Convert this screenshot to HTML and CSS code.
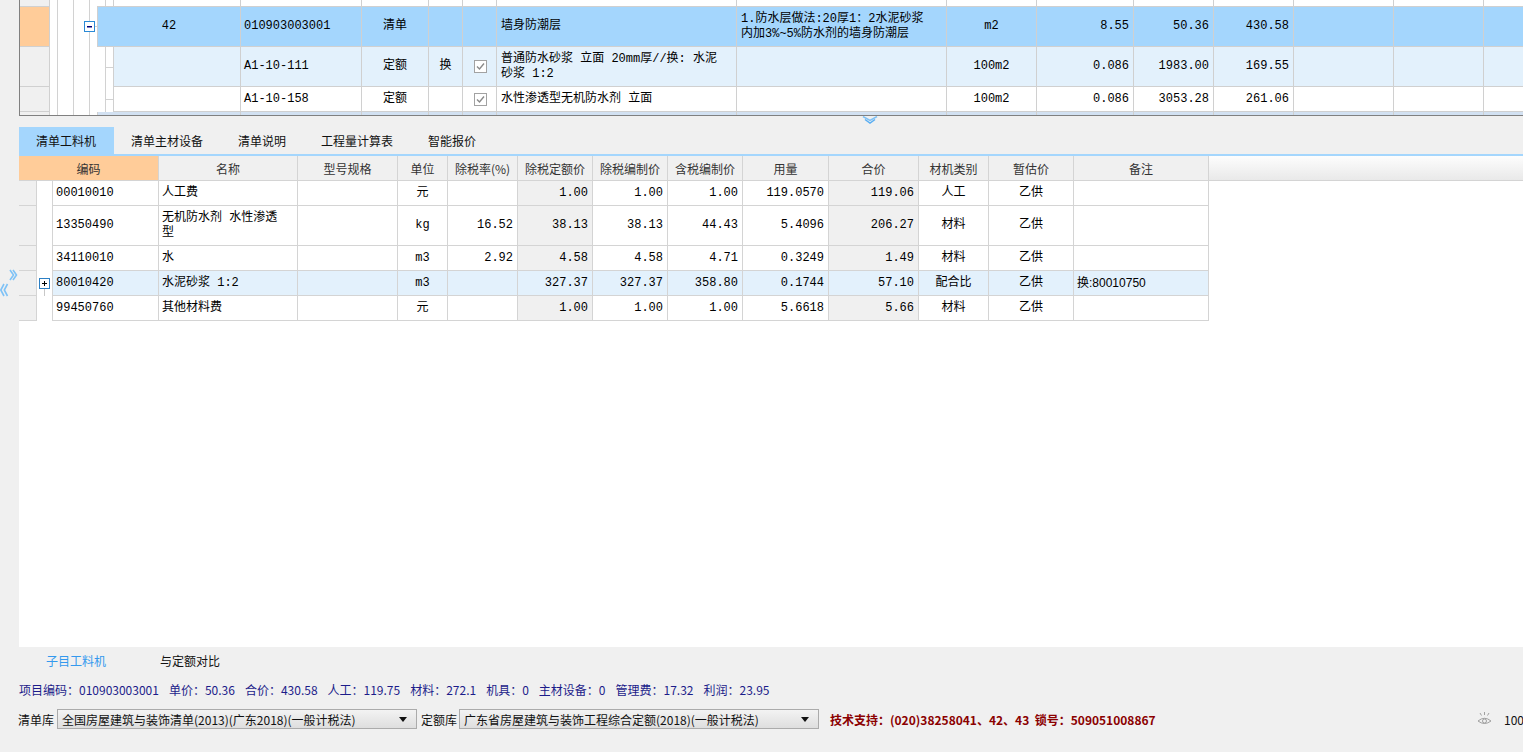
FILE: index.html
```html
<!DOCTYPE html>
<html lang="zh-CN">
<head>
<meta charset="utf-8">
<title>清单工料机</title>
<link rel="stylesheet" href="styles.css">
</head>
<body>
<div class="app">

  <section class="top-pane">
    <div class="trow r0">
      <div class="rh rh-open"></div>
      <div class="gut gut-sub noconn"></div>
      <div class="cells c-white open">
        <div class="c w1s"></div><div class="c w2"></div><div class="c w3"></div><div class="c w4"></div><div class="c w5"></div><div class="c w6"></div><div class="c w7"></div><div class="c w8"></div><div class="c w9"></div><div class="c w10"></div><div class="c w11"></div><div class="c w12"></div><div class="c w13"></div><div class="c w14"></div>
      </div>
    </div>

    <div class="trow r1">
      <div class="rh sel topb"></div>
      <div class="gut gut-main"><span class="tbox minus"></span></div>
      <div class="cells c-sel topb">
        <div class="c w1m ctr">42</div>
        <div class="c w2">010903003001</div>
        <div class="c w3 ctr">清单</div>
        <div class="c w4"></div>
        <div class="c w5"></div>
        <div class="c w6">墙身防潮层</div>
        <div class="c w7">1.防水层做法:20厚1：2水泥砂浆<br>内加3%~5%防水剂的墙身防潮层</div>
        <div class="c w8 ctr">m2</div>
        <div class="c w9 num">8.55</div>
        <div class="c w10 num">50.36</div>
        <div class="c w11 num">430.58</div>
        <div class="c w12"></div><div class="c w13"></div><div class="c w14"></div>
      </div>
    </div>

    <div class="trow r2">
      <div class="rh"></div>
      <div class="gut gut-sub"></div>
      <div class="cells c-light">
        <div class="c w1s"></div>
        <div class="c w2">A1-10-111</div>
        <div class="c w3 ctr">定额</div>
        <div class="c w4 ctr">换</div>
        <div class="c w5 ctr"><span class="chk"><svg viewBox="0 0 11 11" width="11" height="11"><polyline points="2,5.5 4.5,8 9,2.5" fill="none" stroke="#8a8a8a" stroke-width="1.4"/></svg></span></div>
        <div class="c w6">普通防水砂浆 立面 20mm厚//换: 水泥<br>砂浆 1:2</div>
        <div class="c w7"></div>
        <div class="c w8 ctr">100m2</div>
        <div class="c w9 num">0.086</div>
        <div class="c w10 num">1983.00</div>
        <div class="c w11 num">169.55</div>
        <div class="c w12"></div><div class="c w13"></div><div class="c w14"></div>
      </div>
    </div>

    <div class="trow r3">
      <div class="rh"></div>
      <div class="gut gut-sub"></div>
      <div class="cells c-white">
        <div class="c w1s"></div>
        <div class="c w2">A1-10-158</div>
        <div class="c w3 ctr">定额</div>
        <div class="c w4"></div>
        <div class="c w5 ctr"><span class="chk"><svg viewBox="0 0 11 11" width="11" height="11"><polyline points="2,5.5 4.5,8 9,2.5" fill="none" stroke="#8a8a8a" stroke-width="1.4"/></svg></span></div>
        <div class="c w6">水性渗透型无机防水剂 立面</div>
        <div class="c w7"></div>
        <div class="c w8 ctr">100m2</div>
        <div class="c w9 num">0.086</div>
        <div class="c w10 num">3053.28</div>
        <div class="c w11 num">261.06</div>
        <div class="c w12"></div><div class="c w13"></div><div class="c w14"></div>
      </div>
    </div>

    <div class="trow r4">
      <div class="rh"></div>
      <div class="gut gut-main"></div>
      <div class="cells c-next">
        <div class="c w1m"></div><div class="c w2"></div><div class="c w3"></div><div class="c w4"></div><div class="c w5"></div><div class="c w6"></div><div class="c w7"></div><div class="c w8"></div><div class="c w9"></div><div class="c w10"></div><div class="c w11"></div><div class="c w12"></div><div class="c w13"></div><div class="c w14"></div>
      </div>
    </div>
  </section>

  <div class="splitter">
    <svg class="split-chev" width="16" height="8" viewBox="0 0 16 8">
      <polyline points="1,0.5 8,4.5 15,0.5" fill="none" stroke="#7cc0f6" stroke-width="1.5"/>
      <polyline points="3,3.5 8,7 13,3.5" fill="none" stroke="#5aaef2" stroke-width="1.5"/>
    </svg>
  </div>

  <div class="lower">
    <div class="side">
      <svg width="19" height="32" viewBox="0 0 19 32">
        <polyline points="10,3 13.5,8 10,13" fill="none" stroke="#7fc2f6" stroke-width="1.6"/>
        <polyline points="13,3 16.5,8 13,13" fill="none" stroke="#7fc2f6" stroke-width="1.6"/>
        <polyline points="4,17 0.8,23 4,29" fill="none" stroke="#7fc2f6" stroke-width="1.6"/>
        <polyline points="7.5,17 4.3,23 7.5,29" fill="none" stroke="#7fc2f6" stroke-width="1.6"/>
      </svg>
    </div>
    <div class="lower-main">
      <div class="tabs">
        <div class="tab active">清单工料机</div>
        <div class="tab">清单主材设备</div>
        <div class="tab">清单说明</div>
        <div class="tab">工程量计算表</div>
        <div class="tab">智能报价</div>
      </div>

      <div class="grid-area">
        <div class="bhead">
          <div class="h hc0 code-h">编码</div>
          <div class="h hc3">名称</div>
          <div class="h hc4">型号规格</div>
          <div class="h hc5">单位</div>
          <div class="h hc6">除税率(%)</div>
          <div class="h hc7">除税定额价</div>
          <div class="h hc8">除税编制价</div>
          <div class="h hc9">含税编制价</div>
          <div class="h hc10">用量</div>
          <div class="h hc11">合价</div>
          <div class="h hc12">材机类别</div>
          <div class="h hc13">暂估价</div>
          <div class="h hc14">备注</div>
          <div class="h hfill"></div>
        </div>

        <div class="brow">
          <div class="d rhd"></div><div class="d tree"></div>
          <div class="d">00010010</div><div class="d">人工费</div><div class="d"></div><div class="d ctr">元</div><div class="d num"></div>
          <div class="d num shade">1.00</div><div class="d num">1.00</div><div class="d num">1.00</div><div class="d num">119.0570</div>
          <div class="d num shade">119.06</div><div class="d ctr">人工</div><div class="d ctr">乙供</div><div class="d"></div>
        </div>
        <div class="brow tall">
          <div class="d rhd"></div><div class="d tree"></div>
          <div class="d">13350490</div><div class="d">无机防水剂 水性渗透<br>型</div><div class="d"></div><div class="d ctr">kg</div><div class="d num">16.52</div>
          <div class="d num shade">38.13</div><div class="d num">38.13</div><div class="d num">44.43</div><div class="d num">5.4096</div>
          <div class="d num shade">206.27</div><div class="d ctr">材料</div><div class="d ctr">乙供</div><div class="d"></div>
        </div>
        <div class="brow">
          <div class="d rhd"></div><div class="d tree"></div>
          <div class="d">34110010</div><div class="d">水</div><div class="d"></div><div class="d ctr">m3</div><div class="d num">2.92</div>
          <div class="d num shade">4.58</div><div class="d num">4.58</div><div class="d num">4.71</div><div class="d num">0.3249</div>
          <div class="d num shade">1.49</div><div class="d ctr">材料</div><div class="d ctr">乙供</div><div class="d"></div>
        </div>
        <div class="brow hl">
          <div class="d rhd"></div><div class="d tree node"><span class="tbox plus"></span><span class="stem"></span></div>
          <div class="d">80010420</div><div class="d">水泥砂浆 1:2</div><div class="d"></div><div class="d ctr">m3</div><div class="d num"></div>
          <div class="d num">327.37</div><div class="d num">327.37</div><div class="d num">358.80</div><div class="d num">0.1744</div>
          <div class="d num">57.10</div><div class="d ctr">配合比</div><div class="d ctr">乙供</div><div class="d note">换:80010750</div>
        </div>
        <div class="brow">
          <div class="d rhd"></div><div class="d tree"></div>
          <div class="d">99450760</div><div class="d">其他材料费</div><div class="d"></div><div class="d ctr">元</div><div class="d num"></div>
          <div class="d num shade">1.00</div><div class="d num">1.00</div><div class="d num">1.00</div><div class="d num">5.6618</div>
          <div class="d num shade">5.66</div><div class="d ctr">材料</div><div class="d ctr">乙供</div><div class="d"></div>
        </div>
      </div>
    </div>
  </div>

  <div class="subtabs">
    <span class="subtab on">子目工料机</span>
    <span class="subtab">与定额对比</span>
  </div>

  <div class="summary">
    <span>项目编码：010903003001</span>
    <span>单价：50.36</span>
    <span>合价：430.58</span>
    <span>人工：119.75</span>
    <span>材料：272.1</span>
    <span>机具：0</span>
    <span>主材设备：0</span>
    <span>管理费：17.32</span>
    <span>利润：23.95</span>
  </div>

  <div class="status">
    <span class="lbl">清单库</span>
    <div class="combo"><span>全国房屋建筑与装饰清单(2013)(广东2018)(一般计税法)</span><svg width="8" height="5" viewBox="0 0 8 5"><polygon points="0,0 8,0 4,5" fill="#111"/></svg></div>
    <span class="lbl lbl2">定额库</span>
    <div class="combo"><span>广东省房屋建筑与装饰工程综合定额(2018)(一般计税法)</span><svg width="8" height="5" viewBox="0 0 8 5"><polygon points="0,0 8,0 4,5" fill="#111"/></svg></div>
    <span class="support">技术支持：(020)38258041、42、43&nbsp; 锁号：509051008867</span>
    <div class="zoombox">
      <svg width="15" height="14" viewBox="0 0 15 14">
        <line x1="7.5" y1="0" x2="7.5" y2="3" stroke="#a0a0a0" stroke-width="1"/>
        <line x1="3" y1="1" x2="4.5" y2="3.5" stroke="#a0a0a0" stroke-width="1"/>
        <line x1="12" y1="1" x2="10.5" y2="3.5" stroke="#a0a0a0" stroke-width="1"/>
        <path d="M1 9 Q7.5 3.5 14 9 Q7.5 14 1 9 Z" fill="none" stroke="#a0a0a0" stroke-width="1"/>
        <circle cx="7.5" cy="9" r="2" fill="none" stroke="#a0a0a0" stroke-width="1"/>
      </svg>
      <span class="zoomtxt">100%</span>
    </div>
  </div>

</div>
</body>
</html>
```

FILE: styles.css
```css
* { box-sizing: border-box; }
html, body { margin: 0; padding: 0; }
body {
  background: #f0f0f0;
  width: 1523px;
  height: 752px;
  overflow: hidden;
  font-family: "Noto Sans CJK SC", "Liberation Sans", sans-serif;
  font-size: 12px;
  color: #000;
}
.app { display: flex; flex-direction: column; height: 752px; }

/* ---------- top tree grid ---------- */
.top-pane {
  margin-left: 19px;
  height: 116px;
  flex: none;
  background: #fff;
  border-left: 1px solid #808080;
  border-bottom: 1px solid #808080;
  overflow: hidden;
}
.trow { display: flex; flex: none; }
.r0 { height: 6px; }
.r1 { height: 41px; }
.r2 { height: 40px; }
.r3 { height: 25px; }
.r4 { height: 20px; }

.rh {
  width: 30px;
  flex: none;
  background: #f0f0f0;
  border-right: 1px solid #d0d0d0;
  border-bottom: 1px solid #d0d0d0;
}
.rh.rh-open { border-bottom: none; }
.rh.sel { background: #ffcc99; }
.topb { border-top: 1px solid #d0d0d0; }

.gut {
  flex: none;
  display: flex;
  align-items: center;
  background-repeat: no-repeat;
}
.gut-main {
  width: 47px;
  padding-left: 34px;
  background-image:
    linear-gradient(#d2d2d2, #d2d2d2),
    linear-gradient(#d2d2d2, #d2d2d2),
    linear-gradient(#d2d2d2, #d2d2d2),
    linear-gradient(#d2d2d2, #d2d2d2);
  background-size: 1px 100%, 1px 100%, 1px 100%, 3px 1px;
  background-position: 7px 0, 23px 0, 39px 0, 44px 50%;
}
.gut-sub {
  width: 63px;
  background-image:
    linear-gradient(#d2d2d2, #d2d2d2),
    linear-gradient(#d2d2d2, #d2d2d2),
    linear-gradient(#d2d2d2, #d2d2d2),
    linear-gradient(#d2d2d2, #d2d2d2),
    linear-gradient(#d2d2d2, #d2d2d2);
  background-size: 1px 100%, 1px 100%, 1px 100%, 1px 100%, 8px 1px;
  background-position: 7px 0, 23px 0, 39px 0, 55px 0, 55px 50%;
}
.gut-sub.noconn { background-size: 1px 100%, 1px 100%, 1px 100%, 1px 100%, 0 0; }

.tbox {
  width: 11px;
  height: 11px;
  flex: none;
  background: #fff;
  border: 1px solid #2a8ad6;
  position: relative;
  display: block;
}
.tbox.minus::before {
  content: "";
  position: absolute;
  left: 2px; top: 4px;
  width: 5px; height: 1px;
  background: #00007a;
  box-shadow: 0 0.5px 0 #00007a;
}
.tbox.plus { border-color: #2c7fc4; }
.tbox.plus::before {
  content: "";
  position: absolute;
  left: 2px; top: 4px;
  width: 5px; height: 1px;
  background: #000;
}
.tbox.plus::after {
  content: "";
  position: absolute;
  left: 4px; top: 2px;
  width: 1px; height: 5px;
  background: #000;
}

.cells {
  display: flex;
  flex: 1;
  min-width: 0;
  border-left: 1px solid #d0d0d0;
}
.c-sel { background: #a4d6fd; }
.c-light { background: #e3f1fc; }
.c-white { background: #fff; }
.c-next { background: #d2e1f2; }

.c {
  flex: none;
  display: flex;
  align-items: center;
  padding: 0 4px 0 3px;
  border-right: 1px solid #d0d0d0;
  border-bottom: 1px solid #d0d0d0;
  font-family: "Liberation Mono", "Noto Sans CJK SC", monospace;
  font-size: 12px;
  line-height: 15px;
  white-space: nowrap;
  overflow: hidden;
}
.open .c { border-bottom: none; }
.c.ctr { justify-content: center; padding: 0; }
.c.num { justify-content: flex-end; padding-right: 4px; }
.w1m { width: 143px; }
.w1s { width: 127px; }
.w2 { width: 121px; }
.w3 { width: 67px; }
.w4 { width: 34px; }
.w5 { width: 34px; }
.w6 { width: 240px; padding-left: 4px; }
.w7 { width: 210px; padding-left: 4px; }
.w8 { width: 90px; }
.w9 { width: 97px; }
.w10 { width: 80px; }
.w11 { width: 80px; }
.w12 { width: 100px; }
.w13 { width: 90px; }
.w14 { flex: 1; border-right: none; }

.chk {
  width: 13px;
  height: 13px;
  border: 1px solid #a2a2a2;
  background: #fff;
  display: flex;
  align-items: center;
  justify-content: center;
  margin-left: 1px;
}

/* ---------- splitter ---------- */
.splitter {
  height: 11px;
  flex: none;
  padding-left: 862px;
}
.split-chev { display: block; }

/* ---------- lower pane ---------- */
.lower { display: flex; flex: none; height: 520px; }
.side { width: 19px; flex: none; padding-top: 140px; }
.side svg { display: block; }
.lower-main { flex: 1; display: flex; flex-direction: column; min-width: 0; }

.tabs {
  height: 29px;
  flex: none;
  display: flex;
  border-bottom: 2px solid #a4d6fd;
}
.tab {
  padding: 0 18px 0 17px;
  line-height: 27px;
  font-size: 12px;
  color: #111;
  white-space: nowrap;
}
.tab.active { background: #a4d6fd; }

.grid-area {
  flex: 1;
  background: #fff;
  overflow: hidden;
}
.bhead { display: flex; height: 25px; }
.h {
  flex: none;
  display: flex;
  align-items: center;
  justify-content: center;
  background: #f0f0f0;
  border-right: 1px solid #d4d4d4;
  border-bottom: 1px solid #d4d4d4;
  color: #333;
  font-size: 12px;
  white-space: nowrap;
}
.code-h { background: #ffcc99; }
.hc0 { width: 140px; }
.hc3 { width: 139px; }
.hc4 { width: 100px; }
.hc5 { width: 50px; }
.hc6 { width: 70px; }
.hc7, .hc8, .hc9 { width: 75px; }
.hc10 { width: 86px; }
.hc11 { width: 90px; }
.hc12 { width: 70px; }
.hc13 { width: 85px; }
.hc14 { width: 135px; }
.hfill {
  flex: 1;
  border-right: none;
  background: linear-gradient(#fdfdfd, #e9e9e9);
}

.brow {
  display: grid;
  grid-template-columns: 18px 16px 106px 139px 100px 50px 70px 75px 75px 75px 86px 90px 70px 85px 135px;
  height: 25px;
}
.brow.tall { height: 40px; }
.d {
  display: flex;
  align-items: center;
  padding: 0 4px 0 3px;
  border-right: 1px solid #d4d4d4;
  border-bottom: 1px solid #d4d4d4;
  font-family: "Liberation Mono", "Noto Sans CJK SC", monospace;
  font-size: 12px;
  line-height: 15px;
  white-space: nowrap;
  overflow: hidden;
}
.d.ctr { justify-content: center; padding: 0; }
.d.num { justify-content: flex-end; padding-right: 4px; }
.d.shade { background: #f0f0f0; }
.d.rhd { background: #f0f0f0; padding: 0; }
.d.tree { border-bottom: none; padding: 0; background: #fff; }
.d.node {
  flex-direction: column;
  justify-content: flex-start;
  align-items: center;
  padding-top: 7px;
}
.stem { width: 1px; height: 7px; background: #c8c8c8; }
.brow.hl .d { background: #e3f1fc; }
.brow.hl .d.rhd { background: #f0f0f0; }
.brow.hl .d.tree { background: #fff; }
.d.note { font-family: "Liberation Sans", "Noto Sans CJK SC", sans-serif; }

/* ---------- bottom bars ---------- */
.subtabs {
  height: 28px;
  flex: none;
  display: flex;
  align-items: center;
  padding-left: 46px;
  gap: 54px;
  font-size: 12px;
}
.subtab { color: #111; line-height: 16px; }
.subtab.on { color: #3399ee; }

.summary {
  height: 28px;
  flex: none;
  display: flex;
  align-items: center;
  padding-left: 19px;
  gap: 10px;
  color: #1c1c8a;
  font-size: 12px;
  white-space: nowrap;
}

.status {
  height: 32px;
  flex: none;
  display: flex;
  align-items: center;
  padding-left: 18px;
  font-size: 12px;
  white-space: nowrap;
}
.lbl { width: 36px; margin-right: 3px; color: #111; }
.lbl2 { margin-left: 4px; margin-right: 2px; }
.combo {
  width: 360px;
  height: 20px;
  border: 1px solid #ababab;
  background: linear-gradient(#f3f3f3, #dedede);
  display: flex;
  align-items: center;
  justify-content: space-between;
  padding: 0 9px 0 4px;
  color: #111;
}
.combo svg { display: block; }
.support {
  margin-left: 11px;
  color: #8b0000;
  font-weight: bold;
}
.zoombox {
  margin-left: auto;
  width: 46px;
  display: flex;
  align-items: center;
  gap: 12px;
  overflow: hidden;
}
.zoombox svg { flex: none; display: block; }
.zoomtxt { color: #111; }
```
